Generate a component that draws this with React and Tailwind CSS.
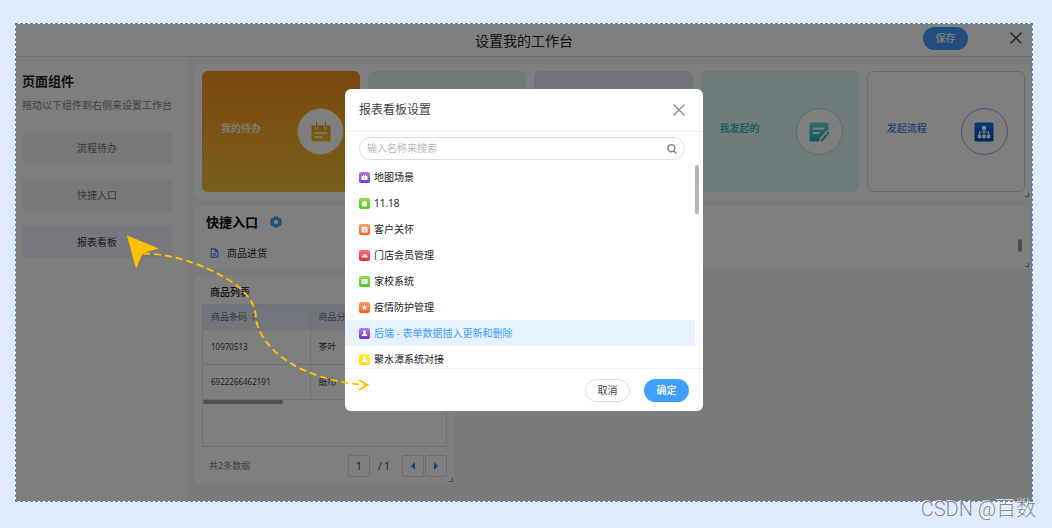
import { useState } from "react";

const COMPONENTS = ["流程待办", "快捷入口", "报表看板"];

const APPS = [
  { name: "地图场景", icon: "case", color: "from-[#b57bee] to-[#7a35d0]" },
  { name: "11.18", icon: "bag", color: "from-[#8be04a] to-[#4cc71c]" },
  { name: "客户关怀", icon: "box", color: "from-[#ff9a5c] to-[#fb5a1e]" },
  { name: "门店会员管理", icon: "cloud", color: "from-[#ff6b78] to-[#f91f35]" },
  { name: "家校系统", icon: "board", color: "from-[#8be04a] to-[#4cc71c]" },
  { name: "疫情防护管理", icon: "star", color: "from-[#ff9a5c] to-[#fb5a1e]" },
  {
    name: "后端 - 表单数据插入更新和删除",
    icon: "user",
    color: "from-[#b57bee] to-[#6f2cc6]",
  },
  { name: "聚水潭系统对接", icon: "user", color: "from-[#fff04a] to-[#fbd808]" },
];

const ROWS = [
  { code: "10970513", category: "茶叶" },
  { code: "6922266462191", category: "纸巾" },
];

const APP_SHAPES = {
  case: (
    <path d="M4 3h1v1h1V3h1v1h1.500v4h-6V4H4zM5 5.500v1h1v-1z" fillRule="evenodd" />
  ),
  bag: <path d="M3 4h1.200a1.300 1.300 0 0 1 2.600 0H8v4.500H3z" />,
  box: (
    <path
      d="M2.500 2.800h6v5.700h-6zM3.500 4.200v.6h4v-.6zM5.100 5.500v.7h-.7v.7h.7v.7h.8v-.7h.7v-.7h-.7v-.7z"
      fillRule="evenodd"
    />
  ),
  cloud: (
    <path d="M2.500 7.500c0-1.200.8-1.700 1.500-1.800C4.200 3.800 6.600 3.400 7.300 5c1 .2 1.400 1.300 1.200 2.500z" />
  ),
  board: (
    <path
      d="M2.500 3h6v5h-6zM3.500 5.600h1.200L5.500 6.400l1.800-.8v-.6l-1.700.7-.7-.7H3.500z"
      fillRule="evenodd"
    />
  ),
  star: (
    <path d="M5.500 2.500l.9 2 2.200.2-1.700 1.400.6 2.200-2-1.200-2 1.200.6-2.200L2.400 4.700l2.200-.2z" />
  ),
  user: (
    <path d="M5.500 2.300a1.500 1.500 0 0 1 .9 2.700l.4 1.200c1 .2 1.600.8 1.600 1.900H2.600c0-1.100.6-1.700 1.600-1.900L4.600 5a1.500 1.500 0 0 1 .9-2.700z" />
  ),
};

const AppIcon = ({ icon, color }) => (
  <span className={`size-[11px] shrink-0 rounded-xs bg-linear-to-b ${color}`}>
    <svg viewBox="0 0 11 11" className="block size-full fill-white">
      {APP_SHAPES[icon]}
    </svg>
  </span>
);

const CloseIcon = ({ className }) => (
  <svg
    viewBox="0 0 12 12"
    className={className}
    fill="none"
    stroke="currentColor"
    strokeWidth="1.300"
  >
    <path d="M.5.500l11 11M11.500.500l-11 11" />
  </svg>
);

const TodoIcon = () => (
  <svg viewBox="0 0 20 20" className="size-5">
    <defs>
      <linearGradient id="todo" x1="0" y1="0" x2="0" y2="1">
        <stop offset="0" stopColor="#f09a20" />
        <stop offset="1" stopColor="#f0c020" />
      </linearGradient>
    </defs>
    <path
      d="M.5 3.500h3.500V6a1.500 1.500 0 0 0 3 0V3.500h6V6a1.500 1.500 0 0 0 3 0V3.500h3.500V18a1.500 1.500 0 0 1-1.500 1.500H2A1.500 1.500 0 0 1 .5 18z"
      fill="url(#todo)"
    />
    <path d="M5.500 1v5M14.500 1v5" stroke="#f0a020" strokeWidth="1.600" strokeLinecap="round" />
    <path d="M4 11h12M4 15h7" stroke="white" strokeWidth="1.600" strokeLinecap="round" />
  </svg>
);

const NoteIcon = () => (
  <svg viewBox="0 0 20 20" className="size-5">
    <defs>
      <linearGradient id="note" x1="0" y1="0" x2="0" y2="1">
        <stop offset="0" stopColor="#62d4dc" />
        <stop offset="1" stopColor="#2eaab8" />
      </linearGradient>
    </defs>
    <path
      d="M2 .500h16A1.500 1.500 0 0 1 19.500 2v5L9.500 19.500H2A1.500 1.500 0 0 1 .500 18V2A1.500 1.500 0 0 1 2 .500z"
      fill="url(#note)"
    />
    <path d="M4.500 6.500h10M4.500 11h5.500" stroke="white" strokeWidth="1.800" strokeLinecap="round" />
    <path d="M12 18.500l7-8" stroke="white" strokeWidth="4.600" />
    <path d="M12.300 19l5.200-6" stroke="#3ab6c2" strokeWidth="2.600" />
    <path d="M18.700 11.500l.6-.7" stroke="#3ab6c2" strokeWidth="2.600" strokeLinecap="round" />
  </svg>
);

const FlowIcon = () => (
  <svg viewBox="0 0 20 20" className="size-5">
    <defs>
      <linearGradient id="flow" x1="0" y1="0" x2="0" y2="1">
        <stop offset="0" stopColor="#0a7ae8" />
        <stop offset="1" stopColor="#0a48b8" />
      </linearGradient>
    </defs>
    <rect x=".5" y=".5" width="19" height="19" rx="1.500" fill="url(#flow)" />
    <path d="M10 7v6M5.500 13v-3h9v3" stroke="white" fill="none" strokeWidth="1.200" />
    <path d="M8 4h4v4H8zM3.700 12.700h3.600v3.600H3.700zM8.200 12.700h3.600v3.600H8.200zM12.700 12.700h3.600v3.600h-3.600z" fill="white" />
  </svg>
);

const CARDS = [
  {
    label: "我的待办",
    box: "bg-linear-to-b from-[#f5901c] to-[#efbd35] text-white",
    ring: "border-[#f5cf50]",
    icon: <TodoIcon />,
  },
  { box: "bg-[#dff3ea]" },
  { box: "bg-[#dde6fb]" },
  {
    label: "我发起的",
    box: "bg-[#def5f6] text-[#2fb0bb]",
    ring: "border-[#a4dfe3]",
    icon: <NoteIcon />,
  },
  {
    label: "发起流程",
    box: "border border-[#cfdaf0] text-[#3c86dd]",
    ring: "border-[#8cabea]",
    icon: <FlowIcon />,
  },
];

const ResizeHandle = () => (
  <span className="absolute right-[2px] bottom-[2px] size-1 border-r border-b border-[#888]" />
);

const Sidebar = () => (
  <aside className="w-[171px] shrink-0 bg-[#fcfcfc] px-1.5 pt-4">
    <h2 className="text-[13px] leading-4 font-bold text-[#222]">页面组件</h2>
    <p className="mt-2 text-[10px] leading-4 whitespace-nowrap text-[#888]">
      拖动以下组件到右侧来设置工作台
    </p>
    <div className="mt-[19px] flex w-[150px] flex-col gap-[15px]">
      {COMPONENTS.map((name) => (
        <button
          key={name}
          className={`h-8 rounded-xs text-[10px] ${
            name === "报表看板"
              ? "bg-[#eef2fc] text-[#303133]"
              : "bg-[#f2f2f2] text-[#707278]"
          }`}
        >
          {name}
        </button>
      ))}
    </div>
  </aside>
);

const Shortcuts = () => (
  <section className="relative h-[63px] rounded-md bg-white px-3 pt-2">
    <div className="flex items-center gap-3">
      <h2 className="text-[13px] leading-4 font-bold text-black">快捷入口</h2>
      <svg viewBox="0 0 24 24" className="size-3 fill-[#3e9ff0]">
        <path
          fillRule="evenodd"
          d="M8 1h8l1.500 3.500 4-.2L24 10l-1.800 2L24 14l-3 6-3.500-.4L16 23H8l-1.500-3.400L3 20l-3-6 1.800-2L0 10l3-6 3.500.5zM12 7.500a4.500 4.500 0 1 0 0 9 4.500 4.500 0 0 0 0-9z"
        />
      </svg>
    </div>
    <a href="#stock" className="mt-[15px] ml-1 flex items-center gap-2 text-[10px] leading-4 text-[#222]">
      <svg viewBox="0 0 10 12" className="h-[10px] w-[9px]" fill="none" stroke="#3b7cf0" strokeWidth="1.300">
        <path d="M1 1h5l3 3v7H1zM6 1v3h3M3 6.500h4M3 8.800h4" />
      </svg>
      商品进货
    </a>
    <span className="absolute right-[9px] bottom-[17px] h-[13px] w-1 rounded-full bg-[#999]" />
    <ResizeHandle />
  </section>
);

const ProductList = () => (
  <section className="relative w-[261px] rounded-md bg-white px-2 pt-2 pb-[7px]">
    <h3 className="px-2 text-[10px] leading-4 font-medium text-[#222]">商品列表</h3>
    <div className="mt-1 h-[143px] overflow-hidden border border-[#dfe2e8]">
      <table className="w-[320px] table-fixed border-collapse text-left">
        <thead>
          <tr className="h-6 bg-[#e6edf8] text-[9px] text-[#606a80]">
            <th className="w-[107px] border-r border-b border-[#dfe2e8] px-2 font-normal">
              <span className="flex items-center gap-1">
                商品条码
                <svg viewBox="0 0 6 10" className="h-2 w-[5px] fill-[#b4bac6]">
                  <path d="M3 0l3 4H0zM3 10l3-4H0z" />
                </svg>
              </span>
            </th>
            <th className="border-b border-[#dfe2e8] px-2 font-normal">商品分类</th>
          </tr>
        </thead>
        <tbody>
          {ROWS.map((row) => (
            <tr key={row.code} className="h-[35px] text-[#444]">
              <td className="border-r border-b border-[#dfe2e8] px-2 text-[8px]">
                {row.code}
              </td>
              <td className="border-b border-[#dfe2e8] px-2 text-[9px]">
                {row.category}
              </td>
            </tr>
          ))}
        </tbody>
      </table>
      <div className="h-1 w-20 rounded-full bg-[#a0a0a0]" />
    </div>
    <div className="mt-2 flex items-center text-[10px] text-[#444]">
      <span className="flex-1 pl-[7px] text-[9px] text-[#888]">共2条数据</span>
      <input
        aria-label="页码"
        defaultValue="1"
        className="size-[22px] rounded-xs border border-[#d9dce2] text-center"
      />
      <span className="mr-3 ml-2">/ 1</span>
      <div className="flex gap-px">
        {["M7 0v10L2 5z", "M2 0v10l5-5z"].map((d, i) => (
          <button
            key={d}
            aria-label={i ? "下一页" : "上一页"}
            className="flex size-[22px] items-center justify-center rounded-xs border border-[#d9dce2]"
          >
            <svg viewBox="0 0 9 10" className="size-2 fill-[#2e8ff0]">
              <path d={d} />
            </svg>
          </button>
        ))}
      </div>
    </div>
    <ResizeHandle />
  </section>
);

const BoardDialog = () => {
  const [selected, setSelected] = useState("后端 - 表单数据插入更新和删除");

  return (
    <div
      role="dialog"
      aria-labelledby="dialog-title"
      className="w-[358px] overflow-hidden rounded-md bg-white"
    >
      <div className="flex h-[43px] items-center justify-between border-b border-[#eee] pr-[18px] pl-[14px]">
        <h2 id="dialog-title" className="text-[12px] text-[#444]">
          报表看板设置
        </h2>
        <button aria-label="关闭">
          <CloseIcon className="size-3 text-[#888]" />
        </button>
      </div>
      <div className="pt-[5px] pr-[18px] pl-[14px]">
        <label className="flex h-[23px] items-center rounded-full border border-[#ddd] px-[7px]">
          <input
            aria-label="搜索"
            placeholder="输入名称来搜索"
            className="min-w-0 flex-1 text-[10px] outline-none placeholder:text-[#b8b8b8]"
          />
          <svg viewBox="0 0 12 12" className="size-[10px]" fill="none" stroke="#888" strokeWidth="1.800">
            <circle cx="5.200" cy="5.200" r="4.200" />
            <path d="M8.300 8.300l3 3" />
          </svg>
        </label>
      </div>
      <div className="mt-1 flex h-[204px]">
        <ul className="min-w-0 flex-1 overflow-hidden">
          {APPS.map(({ name, icon, color }) => (
            <li key={name}>
              <button
                onClick={() => setSelected(name)}
                className={`flex h-[26px] w-full items-center gap-1 pl-[14px] text-[10px] ${
                  selected === name ? "bg-[#e6f3ff] text-[#409eff]" : "text-[#222]"
                }`}
              >
                <AppIcon icon={icon} color={color} />
                {name}
              </button>
            </li>
          ))}
        </ul>
        <div className="w-2 pt-px">
          <div className="h-[49px] w-1 rounded-full bg-[#b4b4b4]" />
        </div>
      </div>
      <div className="flex h-[43px] items-center justify-end gap-[14px] border-t border-[#eee] pr-[14px] text-[10px]">
        <button className="h-[23px] w-[45px] rounded-full border border-[#ddd] text-[#444]">
          取消
        </button>
        <button className="h-[23px] w-[45px] rounded-full bg-[#409eff] font-medium text-white">
          确定
        </button>
      </div>
    </div>
  );
};

const App = () => {
  return (
    <div className="relative flex min-h-screen flex-col bg-[#dfebfc] pt-[23px] pr-[19px] pb-[26px] pl-[15px] font-['Noto_Sans','Noto_Sans_CJK_SC',sans-serif]">
      <div className="relative flex flex-1 flex-col border border-dashed border-[#4a8de6] bg-white">
        <header className="grid h-[33px] grid-cols-[1fr_auto_1fr] items-center border-b border-[#dedede]">
          <h1 className="col-start-2 text-[14px] text-[#222]">设置我的工作台</h1>
          <div className="flex items-center justify-end gap-[42px] pr-[10px] pb-1">
            <button className="h-[23px] w-[45px] rounded-full bg-[#409eff] text-[10px] font-medium text-white">
              保存
            </button>
            <button aria-label="退出">
              <CloseIcon className="size-3 text-[#444]" />
            </button>
          </div>
        </header>

        <div className="flex flex-1">
          <Sidebar />
          <main className="flex min-w-0 flex-1 flex-col gap-[7px] bg-[#f3f5f9] pt-[7px] pr-px pl-[7px]">
            <section className="relative rounded-md bg-white py-[7px] pr-[6px] pl-2">
              <div className="grid grid-cols-5 gap-2">
                {CARDS.map(({ label, box, ring, icon }) => (
                  <div
                    key={box}
                    className={`flex h-[121px] items-center justify-between rounded-md pr-4 pl-[19px] ${box}`}
                  >
                    {label && (
                      <>
                        <span className="pb-1.5 text-[10px] font-medium">{label}</span>
                        <span
                          className={`flex size-[47px] items-center justify-center rounded-full border bg-white ${ring}`}
                        >
                          {icon}
                        </span>
                      </>
                    )}
                  </div>
                ))}
              </div>
              <ResizeHandle />
            </section>
            <Shortcuts />
            <ProductList />
          </main>
        </div>

        {/* Mask + dialog */}
        <div className="absolute inset-0 flex items-start justify-center bg-black/50 pt-[65px]">
          <BoardDialog />
        </div>
      </div>

      {/* Drag hint from the component to the dialog */}
      <svg
        viewBox="0 0 400 400"
        className="pointer-events-none absolute top-0 left-0 size-[400px]"
        fill="none"
        stroke="#ffc000"
        strokeWidth="1.900"
      >
        <path
          d="M143 253.500C180 254 215 270 235 284C252 297 256 308 256 320C262 350 300 380 366 385"
          strokeDasharray="7 4"
        />
        <path d="M359 380l8.500 5-8.500 5" />
        <path d="M127 235.500l32 13-16 4.500-7 15.500z" fill="#ffc000" stroke="none" />
      </svg>

      <p className="absolute right-4 bottom-[5px] text-[20px] leading-7 font-light text-[#858991] [font-family:Roboto,'Noto_Sans_CJK_SC',sans-serif] text-shadow-[-1px_-1px_0_#ffffffb0]">
        CSDN @百数
      </p>
    </div>
  );
};

export default App;
